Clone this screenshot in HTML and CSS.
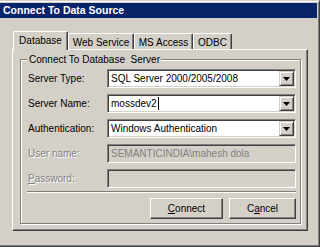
FILE: index.html
```html
<!DOCTYPE html>
<html lang="en">
  <head>
    <meta charset="UTF-8" />
    <meta name="viewport" content="width=device-width, initial-scale=1.0" />
    <title>Connect To Data Source</title>
    <link rel="stylesheet" href="styles.css">
  </head>
  <body>
    <div class="window">
      <div class="title_bar">Connect To Data Source</div>

      <div class="tab_list">
        <div class="tab tab_db -on">Database</div>
        <div class="tab tab_web">Web Service</div>
        <div class="tab tab_access">MS Access</div>
        <div class="tab tab_odbc">ODBC</div>
      </div>

      <div class="panel">
        <fieldset class="group">
          <legend>Connect To Database&nbsp; Server</legend>

          <div class="form_grid">
            <div class="label">Server Type:</div>
            <div class="field">
              <span class="value">SQL Server 2000/2005/2008</span>
              <span class="drop"><svg width="7" height="4" viewBox="0 0 7 4"><polygon points="0,0 7,0 3.5,4" fill="#000"/></svg></span>
            </div>

            <div class="label">Server Name:</div>
            <div class="field">
              <span class="value">mossdev2</span><span class="caret"></span>
              <span class="drop"><svg width="7" height="4" viewBox="0 0 7 4"><polygon points="0,0 7,0 3.5,4" fill="#000"/></svg></span>
            </div>

            <div class="label">Authentication:</div>
            <div class="field">
              <span class="value">Windows Authentication</span>
              <span class="drop"><svg width="7" height="4" viewBox="0 0 7 4"><polygon points="0,0 7,0 3.5,4" fill="#000"/></svg></span>
            </div>

            <div class="label -off">User name:</div>
            <div class="field -off">
              <span class="value">SEMANTICINDIA\mahesh dola</span>
            </div>

            <div class="label -off"><u>P</u>assword:</div>
            <div class="field -off"></div>
          </div>

          <div class="sep"></div>

          <div class="button_row">
            <div class="button btn_connect"><u>C</u>onnect</div>
            <div class="button btn_cancel">C<u>a</u>ncel</div>
          </div>
        </fieldset>
      </div>
    </div>
  </body>
</html>
```

FILE: styles.css
```css
* {
  box-sizing: border-box;
}
body {
  margin: 0;
  background: #d4d0c8;
  font-family: "Liberation Sans", Arial, sans-serif;
  font-size: 10px;
  color: #000;
}
div.window {
  width: 320px;
  height: 247px;
  background: #d4d0c8;
  border-top: 1px solid #d4d0c8;
  border-right: 1px solid #404040;
  border-bottom: 1px solid #404040;
  box-shadow: inset 0 1px 0 #fff, inset -1px -1px 0 #808080;
  padding-top: 2px;
}
div.title_bar {
  height: 15px;
  margin-right: 2px;
  padding-left: 3px;
  background: #0a246a;
  color: #fff;
  font-weight: bold;
  font-size: 10.5px;
  line-height: 15px;
}

/* tabs */
div.tab_list {
  display: flex;
  align-items: flex-end;
  height: 18px;
  margin-top: 13px;
  padding-left: 13px;
}
div.tab {
  height: 16px;
  padding-top: 2px;
  line-height: 13px;
  text-align: center;
  background: #d4d0c8;
  border-top: 1px solid #fff;
  border-left: 1px solid #fff;
  border-right: 1px solid #404040;
  border-radius: 2px 2px 0 0;
  box-shadow: inset -1px 0 0 #808080;
}
div.tab.-on {
  height: 19px;
  margin-bottom: -1px;
  position: relative; /* covers the panel's top edge */
  z-index: 1;
}
div.tab_db { width: 55px; }
div.tab_web { width: 66px; }
div.tab_access { width: 59px; }
div.tab_odbc { width: 39px; }

div.panel {
  width: 296px;
  height: 182px;
  margin-left: 12px;
  padding: 3px 0 0 7px;
  border-top: 1px solid #fff;
  border-left: 1px solid #fff;
  border-right: 1px solid #404040;
  border-bottom: 1px solid #404040;
  box-shadow: inset -1px -1px 0 #808080;
}

/* group box */
fieldset.group {
  margin: 0;
  min-width: 0;
  width: 281px;
  height: 171px;
  padding: 3px 4px 4px 7px;
  border: 1px solid #808080;
  box-shadow: 1px 1px 0 #fff, inset 1px 1px 0 #fff;
}
fieldset.group legend {
  margin-left: -1px;
  padding: 0 1px 0 2px;
  line-height: 13px;
  background: #d4d0c8;
}

div.form_grid {
  display: grid;
  grid-template-columns: 79px 189px;
  grid-auto-rows: 19px;
  row-gap: 6px;
  align-items: center;
}
div.label {
  line-height: 19px;
  white-space: nowrap;
}
div.label.-off {
  color: #808080;
  text-shadow: 1px 1px 0 #fff;
}
div.field {
  display: flex;
  align-items: center;
  height: 19px;
  padding: 1px 1px 1px 3px;
  background: #fff;
  border: 1px solid;
  border-color: #808080 #fff #fff #808080;
  box-shadow: inset 1px 1px 0 #404040, inset -1px -1px 0 #d4d0c8;
  white-space: nowrap;
}
div.field.-off {
  background: #d4d0c8;
  color: #808080;
}
span.caret {
  display: inline-block;
  width: 1px;
  height: 13px;
  margin-left: 1px;
  background: #000;
}
span.drop {
  display: flex;
  align-items: center;
  justify-content: center;
  width: 15px;
  height: 15px;
  margin-left: auto;
  background: #d4d0c8;
  border: 1px solid;
  border-color: #d4d0c8 #404040 #404040 #d4d0c8;
  box-shadow: inset 1px 1px 0 #fff, inset -1px -1px 0 #808080;
}
span.drop svg {
  display: block;
}

div.sep {
  height: 2px;
  margin: 3px 0 0 -1px;
  border-top: 1px solid #808080;
  border-bottom: 1px solid #fff;
}

div.button_row {
  display: flex;
  justify-content: flex-end;
  gap: 6px;
  margin-top: 5px;
}
div.button {
  height: 21px;
  line-height: 19px;
  text-align: center;
  border: 1px solid;
  border-color: #fff #404040 #404040 #fff;
  box-shadow: inset -1px -1px 0 #808080;
}
div.btn_connect { width: 73px; }
div.btn_cancel { width: 67px; }
```
